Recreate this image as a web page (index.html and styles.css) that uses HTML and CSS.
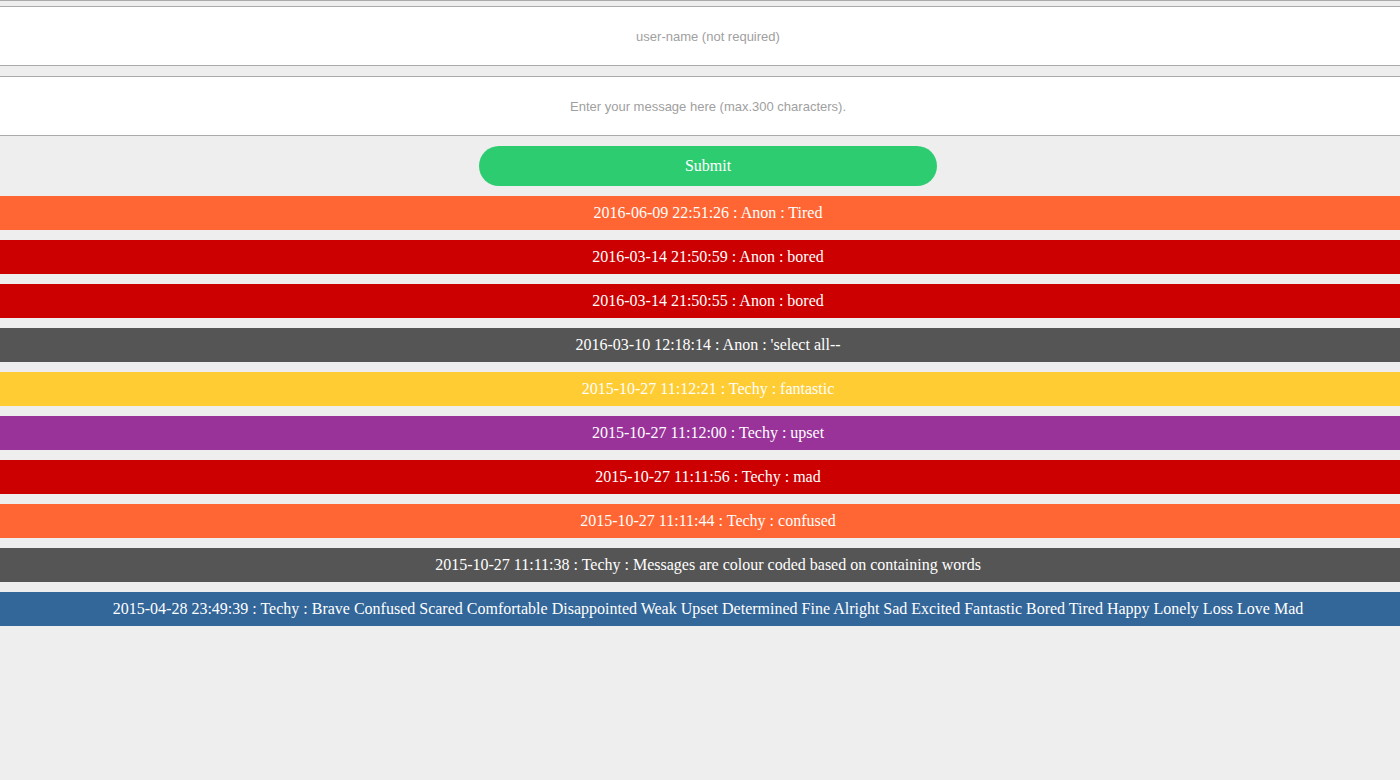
FILE: index.html
```
<!DOCTYPE html>
<html>
<head>
<meta charset="utf-8">
<title>Mood Board</title>
<link rel="stylesheet" href="styles.css">
</head>
<body>
<div class="page">
  <div class="topline"></div>
  <form class="form">
    <input class="field" type="text" placeholder="user-name (not required)">
    <input class="field" type="text" placeholder="Enter your message here (max.300 characters).">
    <button class="submit" type="button">Submit</button>
  </form>
  <div class="messages">
    <div class="msg orange">2016-06-09 22:51:26 : Anon : Tired</div>
    <div class="msg red">2016-03-14 21:50:59 : Anon : bored</div>
    <div class="msg red">2016-03-14 21:50:55 : Anon : bored</div>
    <div class="msg grey">2016-03-10 12:18:14 : Anon : 'select all--</div>
    <div class="msg yellow">2015-10-27 11:12:21 : Techy : fantastic</div>
    <div class="msg purple">2015-10-27 11:12:00 : Techy : upset</div>
    <div class="msg red">2015-10-27 11:11:56 : Techy : mad</div>
    <div class="msg orange">2015-10-27 11:11:44 : Techy : confused</div>
    <div class="msg grey">2015-10-27 11:11:38 : Techy : Messages are colour coded based on containing words</div>
    <div class="msg blue">2015-04-28 23:49:39 : Techy : Brave Confused Scared Comfortable Disappointed Weak Upset Determined Fine Alright Sad Excited Fantastic Bored Tired Happy Lonely Loss Love Mad</div>
  </div>
</div>
</body>
</html>
```

FILE: styles.css
```
html {
  overflow-x: hidden;
}
body {
  margin: 0;
  background: #eeeeee;
  font-family: "Liberation Serif", "Times New Roman", serif;
}
.page {
  width: calc(100% + 16px);
}
.topline {
  border-top: 1px solid #aaaaaa;
  height: 5px;
}
.form {
  display: flex;
  flex-direction: column;
  gap: 10px;
  margin: 0;
}
.field {
  display: block;
  box-sizing: border-box;
  width: 100%;
  height: 60px;
  margin: 0;
  padding: 0;
  border: none;
  border-top: 1px solid #aaaaaa;
  border-bottom: 1px solid #aaaaaa;
  background: #ffffff;
  text-align: center;
  font-family: "Liberation Sans", Arial, sans-serif;
  font-size: 13px;
  color: #333;
  outline: none;
}
.field::placeholder {
  color: #a0a0a0;
}
.submit {
  display: block;
  align-self: center;
  width: 458px;
  height: 40px;
  border: none;
  border-radius: 20px;
  background: #2ecc71;
  color: #ffffff;
  font-family: "Liberation Serif", "Times New Roman", serif;
  font-size: 16px;
  padding: 0;
  cursor: pointer;
}
.messages {
  display: flex;
  flex-direction: column;
  gap: 10px;
  margin-top: 10px;
}
.msg {
  height: 34px;
  line-height: 34px;
  text-align: center;
  color: #ffffff;
  font-size: 16px;
  white-space: nowrap;
}
.orange { background: #ff6633; }
.red { background: #cc0000; }
.grey { background: #555555; }
.yellow { background: #ffcc33; }
.purple { background: #993399; }
.blue { background: #336699; }
```
